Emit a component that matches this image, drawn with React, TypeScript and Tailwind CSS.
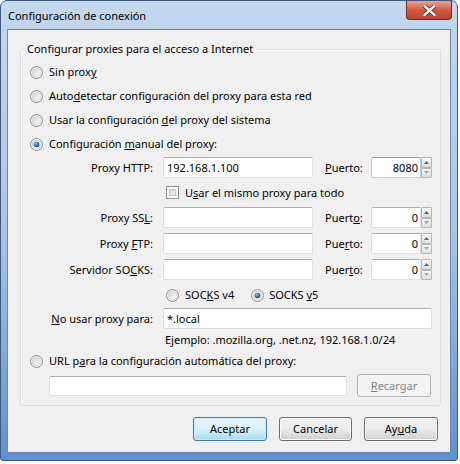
import React from "react";

const Radio = ({ checked = false }: { checked?: boolean }) => (
  <svg width="13" height="13" viewBox="0 0 13 13" className="shrink-0">
    <defs>
      <linearGradient id="rf" x1="0" y1="0" x2="1" y2="1">
        <stop offset="0" stopColor="#d6d6d6" />
        <stop offset="1" stopColor="#fbfbfb" />
      </linearGradient>
      <radialGradient id="rd" cx="0.4" cy="0.35" r="0.7">
        <stop offset="0" stopColor="#8fc4ee" />
        <stop offset="0.6" stopColor="#2a6eb0" />
        <stop offset="1" stopColor="#134a80" />
      </radialGradient>
    </defs>
    <circle cx="6.5" cy="6.5" r="6" fill="#f4f4f4" stroke="#8e8f8f" />
    <circle cx="6.5" cy="6.5" r="4.3" fill="url(#rf)" stroke="#c7c7c7" strokeWidth="0.6" />
    {checked && <circle cx="6.5" cy="6.5" r="2.8" fill="url(#rd)" />}
  </svg>
);

const Checkbox = () => (
  <div className="w-[13px] h-[13px] border border-[#8e8f8f] bg-white p-[2px] shrink-0">
    <div className="w-full h-full border border-[#c3c3c3] bg-gradient-to-br from-[#d3d3d3] to-[#f6f6f6]" />
  </div>
);

const TextBox = ({ value = "", className = "" }: { value?: string; className?: string }) => (
  <div
    className={`h-[21px] bg-white border border-[#dbdfe6] border-t-[#abadb3] rounded-[2px] flex items-center px-[3px] ${className}`}
  >
    {value}
  </div>
);

const Spin = ({ value, focused = false }: { value: string; focused?: boolean }) => (
  <div className="flex h-[21px] w-[61px]">
    <div
      className={`flex-1 bg-white border rounded-l-[2px] flex items-center justify-end pr-[2px] ${
        focused ? "border-[#b7d0e8] border-t-[#7ea5c9]" : "border-[#dbdfe6] border-t-[#abadb3]"
      }`}
    >
      {value}
    </div>
    <div className="w-[11px] flex flex-col">
      {[0, 1].map((i) => (
        <div
          key={i}
          className="flex-1 border border-[#b4b4b4] rounded-[1px] bg-gradient-to-b from-[#f8f8f8] to-[#dedede] flex items-center justify-center"
        >
          <svg width="5" height="3" viewBox="0 0 5 3">
            <path d={i === 0 ? "M0 3 L2.5 0 L5 3 Z" : "M0 0 L2.5 3 L5 0 Z"} fill={i === 0 ? "#4d6185" : "#9aa3b3"} />
          </svg>
        </div>
      ))}
    </div>
  </div>
);

const Btn = ({ children, className = "", primary = false, disabled = false }: { children: React.ReactNode; className?: string; primary?: boolean; disabled?: boolean }) => (
  <div
    className={`h-[24px] rounded-[3px] border flex items-center justify-center ${
      primary
        ? "border-[#3c7fb1] bg-gradient-to-b from-[#eaf6fd] via-[#d9f0fc] to-[#a7d9f5] shadow-[inset_0_0_0_1px_#c8eaf9]"
        : disabled
        ? "border-[#adb2b5] bg-[#f4f4f4] text-[#838383]"
        : "border-[#707070] bg-gradient-to-b from-[#f2f2f2] via-[#ebebeb] to-[#cfcfcf] shadow-[inset_0_0_0_1px_#fcfcfc]"
    } ${className}`}
  >
    {children}
  </div>
);

const ProxyRow = ({ label, value = "", port, puerto, focused = false }: { label: React.ReactNode; value?: string; port: string; puerto: React.ReactNode; focused?: boolean }) => (
  <div className="flex items-center h-[21px]">
    <div className="w-[123px] text-right">{label}</div>
    <TextBox className="ml-[10px] w-[150px]" value={value} />
    <div className="ml-[12px] w-[46px]">{puerto}</div>
    <Spin value={port} focused={focused} />
  </div>
);

const RadioRow = ({ children, checked = false }: { children: React.ReactNode; checked?: boolean }) => (
  <div className="flex items-center h-[24px] gap-[6px]">
    <Radio checked={checked} />
    <span>{children}</span>
  </div>
);

export default function App() {
  return (
    <div className="w-[460px] h-[464px] bg-white text-[11px] leading-[16px] text-black font-['Segoe_UI','Noto_Sans',sans-serif]">
      <div className="w-[458px] h-[461px] flex flex-col rounded-t-[7px] rounded-b-[3px] border border-[#41597a] bg-gradient-to-b from-[#c4d8ee] via-[#a9c5e6] to-[#5f8fd6] px-[6px] pb-[7px]">
        <div className="h-[28px] flex items-start justify-between">
          <div className="pt-[7px] pl-[1px]">Configuración de conexión</div>
          <div className="w-[46px] h-[19px] -mr-[1px] rounded-b-[4px] border border-t-0 border-[#6e2b22] bg-gradient-to-b from-[#e8a493] via-[#cf5b45] to-[#c0412b] flex items-center justify-center">
            <svg width="13" height="11" viewBox="0 0 13 11">
              <path d="M1.5 1 L11.5 10 M11.5 1 L1.5 10" stroke="#4a1c16" strokeWidth="4" strokeLinecap="round" />
              <path d="M1.5 1 L11.5 10 M11.5 1 L1.5 10" stroke="#ffffff" strokeWidth="2.4" strokeLinecap="round" />
            </svg>
          </div>
        </div>
        <div className="flex-1 bg-[#f0f0f0] border border-[#6d87a8] pt-[11px] px-[12px] flex flex-col">
          <fieldset className="border border-[#d5dfe5] rounded-[3px] pl-[9px] pr-[8px] pb-[8px] shadow-[inset_1px_1px_0_#ffffff]">
            <legend className="-ml-[6px] px-[3px] leading-[16px]">Configurar proxies para el acceso a Internet</legend>
            <div className="mt-[3px]">
              <RadioRow>Sin prox<u>y</u></RadioRow>
              <RadioRow>Auto<u>d</u>etectar configuración del proxy para esta red</RadioRow>
              <RadioRow>Usar la configuración <u>d</u>el proxy del sistema</RadioRow>
              <RadioRow checked>Configuración <u>m</u>anual del proxy:</RadioRow>
            </div>
            <div className="mt-[1px]">
              <ProxyRow label="Proxy HTTP:" value="192.168.1.100" port="8080" focused puerto={<><u>P</u>uerto:</>} />
            </div>
            <div className="h-[29px] flex items-center pl-[136px] gap-[6px]">
              <Checkbox />
              <span>U<u>s</u>ar el mismo proxy para todo</span>
            </div>
            <ProxyRow label={<>Proxy SS<u>L</u>:</>} port="0" puerto={<>Puert<u>o</u>:</>} />
            <div className="mt-[5px]">
              <ProxyRow label={<>Proxy <u>F</u>TP:</>} port="0" puerto={<>Pue<u>r</u>to:</>} />
            </div>
            <div className="mt-[5px]">
              <ProxyRow label={<>Servidor SO<u>C</u>KS:</>} port="0" puerto={<>Puer<u>t</u>o:</>} />
            </div>
            <div className="mt-[4px] h-[22px] flex items-center pl-[136px]">
              <Radio />
              <span className="ml-[6px]">SOC<u>K</u>S v4</span>
              <span className="ml-[17px]"><Radio checked /></span>
              <span className="ml-[5px]">SOCKS <u>v</u>5</span>
            </div>
            <div className="mt-[2px] flex items-center h-[21px]">
              <div className="w-[123px] text-right"><u>N</u>o usar proxy para:</div>
              <TextBox className="ml-[10px] w-[269px]" value="*.local" />
            </div>
            <div className="h-[22px] flex items-center pl-[135px]">Ejemplo: .mozilla.org, .net.nz, 192.168.1.0/24</div>
            <div className="flex items-center h-[20px] gap-[6px]">
              <Radio />
              <span>URL p<u>a</u>ra la configuración automática del proxy:</span>
            </div>
            <div className="mt-[3px] h-[23px] flex items-center pl-[19px]">
              <TextBox className="w-[298px] !h-[20px]" />
              <Btn disabled className="ml-[10px] w-[74px] !h-[23px]">
                <span><u>R</u>ecargar</span>
              </Btn>
            </div>
          </fieldset>
          <div className="mt-[11px] flex justify-end gap-[12px]">
            <Btn primary className="w-[74px]">Aceptar</Btn>
            <Btn className="w-[73px]">Cancelar</Btn>
            <Btn className="w-[74px]">Ay<u>u</u>da</Btn>
          </div>
        </div>
      </div>
    </div>
  );
}
